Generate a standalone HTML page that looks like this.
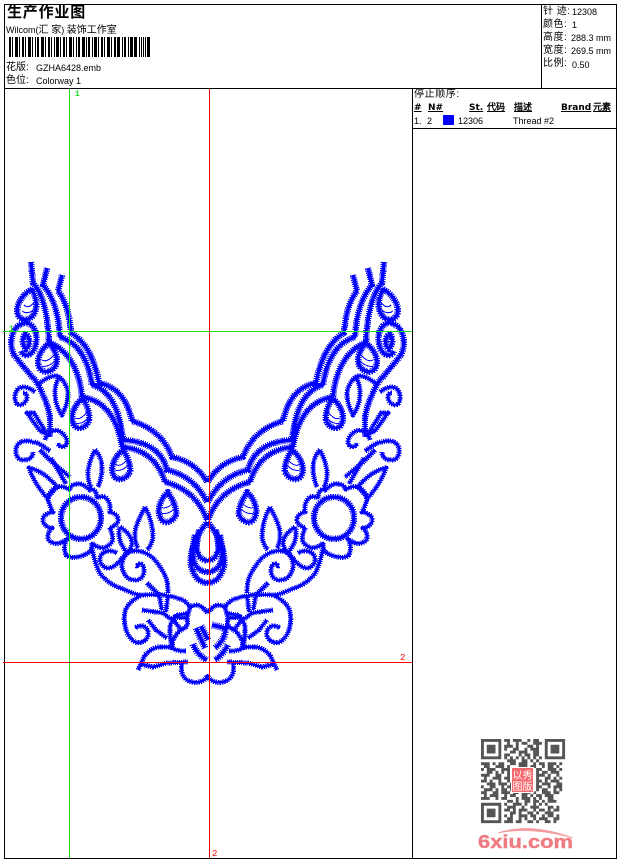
<!DOCTYPE html>
<html><head><meta charset="utf-8">
<style>
html,body{margin:0;padding:0;background:#fff;width:620px;height:860px;overflow:hidden}
body{position:relative;font-family:"Liberation Sans","WenQuanYi Zen Hei","Noto Sans CJK SC",sans-serif;color:#000;font-size:9px}
.t{position:absolute;white-space:nowrap;line-height:12px}
.c{font-size:10px}
.b{font-family:"DejaVu Sans","WenQuanYi Zen Hei",sans-serif;font-weight:bold;font-size:9px;text-decoration:underline}
svg{position:absolute;left:0;top:0}
</style></head><body>
<svg width="620" height="860" viewBox="0 0 620 860">
<defs>
<g id="a" fill="none">
<path d="M62 275L58 291Q69 305 71 333Q92 345 99 383Q125 388 132 421Q162 430 172 457Q196 462 207 482"/>
<path d="M47 268L43 285Q58 302 60 337Q86 345 92 385Q118 392 123 440Q160 442 167 470Q194 476 207 502"/>
<path d="M31 262L33 283Q47 298 49 342Q78 355 82 397Q115 402 122 447Q155 450 165 482Q196 490 207 520"/>
<path d="M32 289C20 296 15 308 18 315C22 322 31 321 35 312C38 303 35 296 32 289Z"/>
<path d="M49 343C40 350 36 360 39 367C42 374 52 373 56 365C59 357 54 349 49 343Z"/>
<path d="M83 398C74 405 70 416 73 423C76 431 86 429 89 420C90 412 86 404 83 398Z"/>
<path d="M123 450C115 456 110 467 113 474C116 482 126 480 130 472C131 464 127 456 123 450Z"/>
<path d="M168 492C160 499 157 510 160 517C163 525 172 523 176 515C177 507 172 499 168 492Z"/>
<path d="M14 355C8 342 12 326 24 323C35 322 39 337 35 347C32 356 24 358 21 351M25 334C31 337 30 346 26 349C22 345 22 338 25 334Z"/>
<path d="M14 355L32 377Q38 382 42 393Q48 405 50 417L50 437"/>
<ellipse cx="81" cy="518" rx="20" ry="21"/>
</g>
<g id="h" fill="none">
<path d="M38 385C44 379 52 375 58 376C64 380 68 388 68 394C68 402 65 409 62 415C58 410 55 401 55 393C55 386 57 380 60 376"/>
<path d="M35 392C30 388 23 385 18 389C14 393 14 400 17 404C21 407 27 402 27 397C27 394 25 393 23 393"/>
<path d="M27 413L34 413L47 434L40 431Z"/>
<path d="M45 440C47 433 53 429 59 431C65 434 69 441 66 445C63 448 59 447 58 443"/>
<path d="M50 451C44 447 38 442 33 442C24 439 17 442 16 449C15 456 19 461 25 460C30 460 33 456 33 452"/>
<path d="M40 450L53 463L70 477M51 458L66 484"/>
<path d="M29 468C40 470 50 478 57 487L47 498C40 490 33 480 29 468Z"/>
<path d="M57 487C50 490 47 497 49 502C50 507 52 510 53 512C46 513 42 517 43 521C44 525 48 528 52 528C49 531 47 535 48 539C50 543 55 544 60 543C62 542 64 541 67 539C64 544 64 550 66 555C70 559 80 558 90 552C92 549 92 546 92 543C96 547 102 549 106 547C112 544 114 540 112 534C111 531 110 529 110 528C115 526 119 522 118 519C117 514 113 513 110 512C111 506 109 500 105 497C102 496 99 497 97 498C97 492 94 488 90 490C86 487 82 483 78 484C72 484 70 487 70 490C66 487 60 486 57 487Z"/>
<path d="M95 450C91 458 88 466 88 474C88 481 90 486 92 488M95 450C100 455 102 462 102 468C102 476 100 482 98 487"/>
<path d="M145 507C140 517 135 526 135 534C135 541 136 545 138 548M145 507C150 516 153 527 153 537C152 543 150 547 147 550"/>
<path d="M120 527C118 532 119 537 120 541C122 546 125 550 127 553M120 527C125 530 130 535 132 541C132 546 130 550 128 553"/>
<path d="M92 548C94 558 96 567 101 575C107 581 112 585 118 587C126 590 133 594 140 595C148 595 156 594 163 595C171 596 178 598 183 600C187 603 189 605 190 607"/>
<path d="M117 553C112 550 106 550 102 554C98 559 100 565 106 568C112 569 118 564 122 558C125 554 128 552 133 551C140 550 148 553 154 559C160 566 165 574 167 581C168 586 168 590 168 593"/>
<path d="M127 553C123 558 121 563 122 568C124 575 128 580 134 580C140 581 144 576 144 571C144 566 142 563 139 564C137 565 137 566 138 568"/>
<path d="M147 583L160 596M159 595L162 610M168 595L166 612"/>
<path d="M140 596C132 600 126 606 125 612C123 620 125 630 129 636C133 642 138 644 142 642C147 640 149 636 148 631C146 626 141 624 135 628"/>
<path d="M142 610L163 613L175 622L182 631M148 620L156 630L167 638M172 619L178 615L190 613"/>
<path d="M177 615L170 625L170 635L172 650"/>
<path d="M138 670L145 655C150 650 155 647 160 647L172 647"/>
<path d="M140 664L153 667L167 663L188 662"/>
<path d="M190 607C195 604 200 605 203 608L208 613"/>
<path d="M173 617L187 618C188 622 188 624 186 627L178 632L173 640L172 647C175 651 181 651 186 651"/>
<path d="M190 607L187 618"/>
<path d="M182 662C181 668 181 673 184 677C188 682 195 684 202 681C206 679 208 677 209 675"/>
</g>
<g id="th" fill="none" stroke="#00f" stroke-width="1">
<path d="M24 305Q29 310 35 301M22 311Q29 316 36 307M42 360Q47 363 54 355M41 366Q48 368 55 361M75 418Q80 421 87 412M75 423Q82 425 88 418M115 464Q120 468 127 460M115 470Q122 472 128 465M161 507Q166 510 173 503M161 513Q168 515 174 509"/>
</g>
<g id="cc" fill="none">
<path d="M207.5 522C196 535 189 552 191 566C194 578 201 583 207.5 583"/>
<path d="M195 535C192 548 192 560 196 566Q201 572 207.5 572"/>
<path d="M199 530C196 545 196 552 200 557Q204 561 207.5 560"/>
</g>
<g id="r" fill="none">
<path d="M196 628L205 648M201 626L208 640"/>
<path d="M193 644C196 652 201 657 207 660"/>
<path d="M212 625L225 628C226 636 222 642 215 648"/>
<path d="M228 645C224 652 220 657 215 660"/>
</g>
</defs>

<g stroke="#00f" fill="none" stroke-linejoin="round" shape-rendering="crispEdges">
<g stroke-width="6.4" stroke-dasharray="1.2 .9"><use href="#a"/><use href="#a" transform="translate(415) scale(-1 1)"/><use href="#cc"/><use href="#cc" transform="translate(415) scale(-1 1)"/></g>
<g stroke-width="3.4"><use href="#a"/><use href="#a" transform="translate(415) scale(-1 1)"/><use href="#cc"/><use href="#cc" transform="translate(415) scale(-1 1)"/></g>
<g stroke-width="5" stroke-dasharray="1.2 .9"><use href="#h"/><use href="#h" transform="translate(415) scale(-1 1)"/></g>
<g stroke-width="2.6"><use href="#h"/><use href="#h" transform="translate(415) scale(-1 1)"/></g>
<g stroke-width="7" stroke-dasharray="1 1.1"><use href="#r"/></g>
<g stroke-width="3.6"><use href="#r"/></g>
<use href="#th"/><use href="#th" transform="translate(415) scale(-1 1)"/>
</g>

<g shape-rendering="crispEdges">
<rect x="4" y="4" width="612" height="1" fill="#000"/>
<rect x="4" y="4" width="1" height="854" fill="#000"/>
<rect x="616" y="4" width="1" height="854" fill="#000"/>
<rect x="4" y="858" width="613" height="1" fill="#000"/>
<rect x="4" y="88" width="612" height="1" fill="#000"/>
<rect x="541" y="4" width="1" height="84" fill="#000"/>
<rect x="412" y="88" width="1" height="770" fill="#000"/>
<rect x="412" y="128" width="204" height="1" fill="#000"/>
<rect x="69" y="89" width="1" height="769" fill="#1fdc1f"/>
<rect x="209" y="89" width="1" height="769" fill="#f00"/>
<rect x="3" y="331" width="409" height="1" fill="#1fdc1f"/>
<rect x="3" y="662" width="409" height="1" fill="#f00"/>
<rect x="443" y="115" width="11" height="10" fill="#00f"/>
<path stroke="#000" fill="none" stroke-width="1" d="M12.5 37v20M19.5 37v20M25.5 37v20M32.5 37v20M35.5 37v20M45.5 37v20M51.5 37v20M54.5 37v20M60.5 37v20M66.5 37v20M73.5 37v20M76.5 37v20M86.5 37v20M92.5 37v20M98.5 37v20M104.5 37v20M111.5 37v20M122.5 37v20M128.5 37v20M139.5 37v20M141.5 37v20M143.5 37v20M145.5 37v20"/>
<path stroke="#000" fill="none" stroke-width="2" d="M10 37v20M23 37v20M38 37v20M49 37v20M64 37v20M79 37v20M89 37v20M102 37v20M115 37v20M125 37v20"/>
<path stroke="#000" fill="none" stroke-width="3" d="M16.5 37v20M29.5 37v20M42.5 37v20M57.5 37v20M70.5 37v20M83.5 37v20M95.5 37v20M108.5 37v20M118.5 37v20M131.5 37v20M135.5 37v20M148.5 37v20"/>
</g>

<!-- QR -->
<g transform="translate(481 739) scale(2.9)" fill="none" stroke="#555" stroke-width="1">
<path stroke-width="1" d="M.5 .5h6v6h-6zM22.5 .5h6v6h-6zM.5 22.5h6v6h-6z"/>
<path fill="#555" stroke="none" d="M2 2h3v3H2zM24 2h3v3h-3zM2 24h3v3H2z"/>
<path d="M8 .5h2m1 0h3m2 0h1m1 0h2M9 1.5h1m2 0h1m1 0h2m2 0h3M8 2.5h3m1 0h1m3 0h2m1 0h1M8 3.5h1m2 0h2m2 0h1m1 0h3M10 4.5h2m1 0h3m2 0h2M8 5.5h2m3 0h1m1 0h2m1 0h2M8 6.5h1m1 0h1m1 0h1m1 0h1m1 0h1m1 0h1m1 0h1M9 7.5h3m2 0h2m1 0h1m1 0h1
M0 8.5h3m1 0h1m1 0h2m2 0h2m1 0h3m2 0h1m1 0h2m1 0h3m1 0h1M1 9.5h2m2 0h3m1 0h1m3 0h3m1 0h2m2 0h1m1 0h2m1 0h1M0 10.5h1m1 0h3m2 0h3m9 0h2m2 0h3m1 0h1M2 11.5h2m1 0h1m1 0h1m1 0h1m9 0h1m1 0h2m1 0h3M0 12.5h3m2 0h2m2 0h1m9 0h3m1 0h1m2 0h1M1 13.5h1m2 0h3m1 0h2m9 0h1m2 0h2m1 0h1m1 0h1M0 14.5h2m1 0h1m2 0h1m2 0h1m9 0h2m1 0h1m1 0h3M2 15.5h3m1 0h3m1 0h1m8 0h1m1 0h3m2 0h2M0 16.5h1m2 0h2m2 0h1m1 0h2m8 0h2m2 0h1m1 0h3M1 17.5h3m1 0h1m1 0h2m1 0h1m8 0h1m1 0h2m2 0h1m1 0h1M0 18.5h2m2 0h2m1 0h3m1 0h2m1 0h3m1 0h1m2 0h3m1 0h2M1 19.5h1m1 0h3m2 0h1m1 0h2m2 0h2m1 0h1m1 0h2m1 0h3M0 20.5h3m2 0h1m1 0h2m3 0h1m1 0h3m1 0h1m1 0h1m2 0h2
M9 21.5h2m1 0h1m2 0h2m1 0h2m1 0h1m1 0h3M8 22.5h1m2 0h3m1 0h1m2 0h1m1 0h1m1 0h1M9 23.5h3m2 0h1m2 0h3m3 0h2m1 0h1M8 24.5h2m1 0h1m1 0h3m2 0h1m1 0h2m1 0h1m1 0h2M10 25.5h2m1 0h1m2 0h2m1 0h1m2 0h3M8 26.5h1m1 0h1m2 0h3m1 0h2m2 0h1m1 0h2m1 0h1M9 27.5h2m2 0h1m1 0h1m2 0h1m1 0h3m2 0h2M8 28.5h3m1 0h2m2 0h2m1 0h1m2 0h2m1 0h1"/>
</g>
<rect x="511" y="767" width="23" height="26" fill="#fff"/>
<rect x="512" y="768" width="21" height="24" fill="#f4696e"/>
<text x="512.5" y="779" font-size="10" fill="#fff" font-family="'WenQuanYi Zen Hei','Noto Sans CJK SC',sans-serif">以秀</text>
<text x="512.5" y="790" font-size="10" fill="#fff" font-family="'WenQuanYi Zen Hei','Noto Sans CJK SC',sans-serif">图版</text>
<path d="M498 833Q530 822 573 838Q530 826 498 833Z" fill="#f29ca0" stroke="#f29ca0" stroke-width=".8"/>
<text x="478" y="848" font-size="18" font-weight="bold" textLength="95" lengthAdjust="spacingAndGlyphs" fill="#ee7c82" stroke="#ee7c82" stroke-width=".4" font-family="'Liberation Sans',sans-serif">6xiu.com</text>
<text x="75" y="96" font-size="8" font-weight="bold" fill="#1fdc1f" font-family="'Liberation Mono',monospace">1</text>
<text x="9" y="331" font-size="8" font-weight="bold" fill="#1fdc1f" font-family="'Liberation Mono',monospace">1</text>
<text x="400" y="660" font-size="9" fill="#f00" font-family="'Liberation Mono',monospace">2</text>
<text x="212" y="856" font-size="9" fill="#f00" font-family="'Liberation Mono',monospace">2</text>
</svg>

<div class="t" style="left:7px;top:4px;font-size:15px;line-height:17px;font-weight:bold;letter-spacing:.8px;font-family:'Liberation Sans','Noto Sans CJK SC',sans-serif">生产作业图</div>
<div class="t" style="left:6px;top:24px">Wilcom(<span class="c">汇 家</span>) <span class="c">装饰工作室</span></div>
<div class="t c" style="left:6px;top:62px">花版:</div><div class="t" style="left:36px;top:62px">GZHA6428.emb</div>
<div class="t c" style="left:6px;top:75px">色位:</div><div class="t" style="left:36px;top:75px">Colorway 1</div>

<div class="t c" style="left:543px;top:6px;letter-spacing:.5px">针 迹:</div><div class="t" style="left:572px;top:6px">12308</div>
<div class="t c" style="left:543px;top:19px;letter-spacing:.5px">颜色:</div><div class="t" style="left:572px;top:19px">1</div>
<div class="t c" style="left:543px;top:32px;letter-spacing:.5px">高度:</div><div class="t" style="left:571px;top:32px">288.3 mm</div>
<div class="t c" style="left:543px;top:45px;letter-spacing:.5px">宽度:</div><div class="t" style="left:571px;top:45px">269.5 mm</div>
<div class="t c" style="left:543px;top:58px;letter-spacing:.5px">比例:</div><div class="t" style="left:572px;top:59px">0.50</div>

<div class="t c" style="left:414px;top:89px;letter-spacing:.6px">停止顺序:</div>
<div class="t b" style="left:414px;top:102px">#</div>
<div class="t b" style="left:428px;top:102px">N#</div>
<div class="t b" style="left:469px;top:102px">St.</div>
<div class="t b" style="left:487px;top:102px">代码</div>
<div class="t b" style="left:514px;top:102px">描述</div>
<div class="t b" style="left:561px;top:102px">Brand</div>
<div class="t b" style="left:593px;top:102px">元素</div>
<div class="t" style="left:414px;top:115px">1.</div>
<div class="t" style="left:427px;top:115px">2</div>
<div class="t" style="left:458px;top:115px">12306</div>
<div class="t" style="left:513px;top:115px">Thread #2</div>
</body></html>
